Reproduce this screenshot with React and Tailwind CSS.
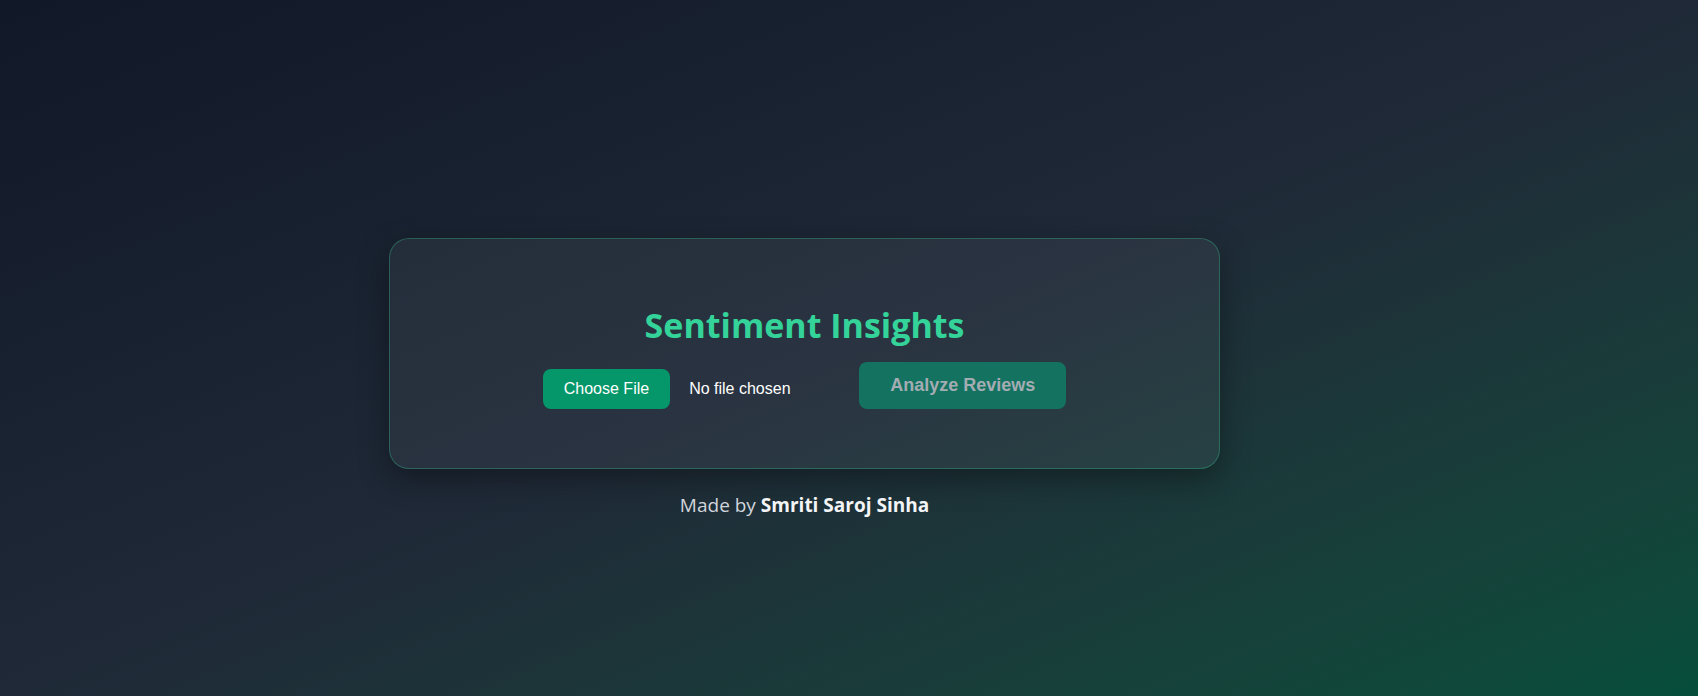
import React, { useState } from 'react';

const App = () => {
  const [file, setFile] = useState(null);

  return (
    <div className="min-h-screen w-full bg-linear-to-br from-[#111827] via-[#1f2937] to-[#064e3b] flex flex-col items-center pt-[238px] pr-[89px]">
      {/* Card */}
      <div className="w-[831px] h-[231px] rounded-[20px] border border-[#34d399]/30 bg-white/[0.05] shadow-[0_10px_30px_rgba(0,0,0,0.35)] flex flex-col items-center pt-[66px]">
        <h1
          className="text-[34px] leading-[40px] font-bold text-[#34d399]"
          style={{ fontFamily: '"Open Sans", sans-serif' }}
        >
          Sentiment Insights
        </h1>

        <div className="flex items-end mt-[17px]" style={{ fontFamily: '"Liberation Sans", Arial, sans-serif' }}>
          <label className="flex items-center cursor-pointer">
            <input
              type="file"
              className="hidden"
              onChange={(e) => setFile(e.target.files?.[0] || null)}
            />
            <span className="h-[40px] px-[21px] rounded-lg bg-[#059669] text-white text-[16px] flex items-center">
              Choose File
            </span>
            <span className="ml-[19px] text-white text-[16px] w-[170px]">
              {file ? file.name : 'No file chosen'}
            </span>
          </label>

          <button
            disabled={!file}
            className="h-[47px] px-[31px] rounded-lg bg-[#137260] text-[#a3acb2] text-[18px] font-bold"
          >
            Analyze Reviews
          </button>
        </div>
      </div>

      {/* Footer */}
      <p
        className="mt-[22px] text-[19px] text-[#d1d5db]"
        style={{ fontFamily: '"Open Sans", sans-serif' }}
      >
        Made by <span className="font-bold text-[#f3f4f6]">Smriti Saroj Sinha</span>
      </p>
    </div>
  );
};

export default App;
